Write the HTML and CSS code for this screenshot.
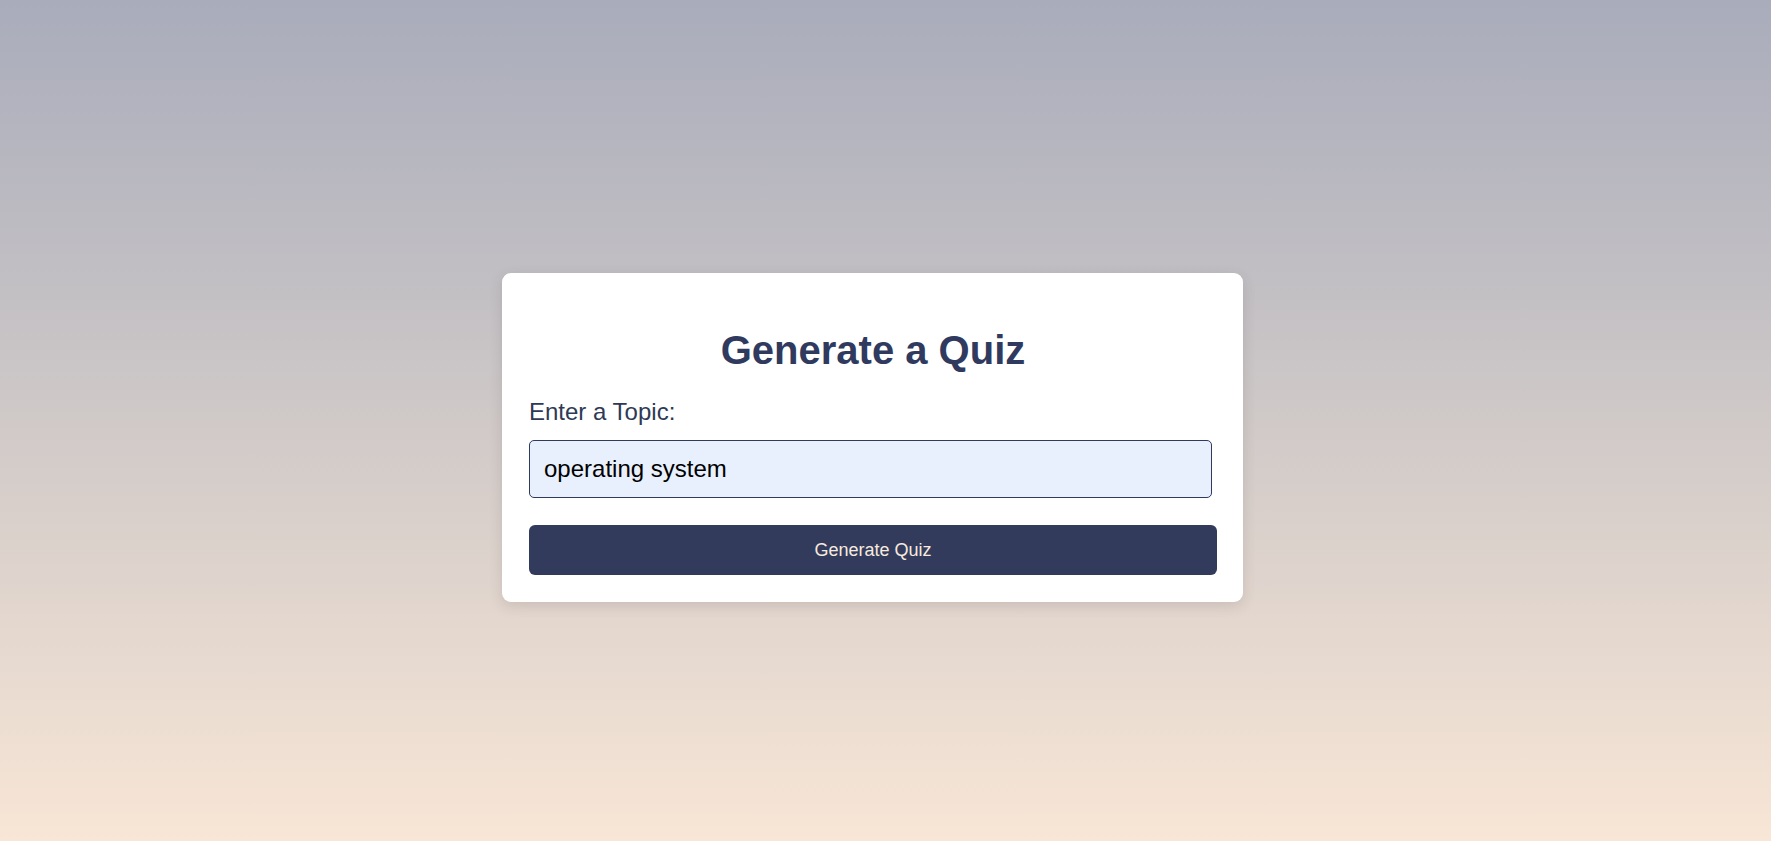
FILE: index.html
```html
<!DOCTYPE html>
<html lang="en">
<head>
<meta charset="utf-8">
<title>Generate a Quiz</title>
<link rel="stylesheet" href="styles.css">
</head>
<body>
<main class="page">
  <form class="card">
    <h2 class="title">Generate a Quiz</h2>
    <label class="label" for="topic">Enter a Topic:</label>
    <input class="input" id="topic" type="text" value="operating system">
    <button class="btn" type="button">Generate Quiz</button>
  </form>
</main>
</body>
</html>
```

FILE: styles.css
```css
html, body {
  margin: 0;
  padding: 0;
  height: 100%;
}
body {
  font-family: "Liberation Sans", Arial, sans-serif;
  background: linear-gradient(to bottom, #a9acbb 0%, #c3c0c4 35%, #dcd2cc 65%, #f8e6d6 100%);
}
.page {
  box-sizing: border-box;
  min-height: 100vh;
  display: flex;
  align-items: center;
  justify-content: center;
  padding: 33px 26px 0 0;
}
.card {
  box-sizing: border-box;
  width: 741px;
  background: #ffffff;
  border-radius: 9px;
  padding: 27px 26px 27px 27px;
  box-shadow: 0 4px 14px rgba(60, 50, 50, 0.14);
  display: flex;
  flex-direction: column;
  align-items: flex-start;
}
.title {
  align-self: stretch;
  margin: 28px 0 25px;
  text-align: center;
  font-size: 40px;
  font-weight: 700;
  color: #2f3a5e;
}
.label {
  font-size: 24px;
  color: #2e3a55;
  margin-bottom: 14px;
}
.input {
  box-sizing: border-box;
  width: 683px;
  height: 58px;
  padding: 0 14px;
  font-family: "Liberation Sans", Arial, sans-serif;
  font-size: 24px;
  color: #000000;
  background: #e8f0fe;
  border: 1px solid #2f3a5c;
  border-radius: 5px;
  outline: none;
  margin: 0 0 27px;
}
.btn {
  align-self: stretch;
  height: 50px;
  padding-top: 2px;
  border: none;
  border-radius: 6px;
  background: #323b5c;
  color: #f7eadf;
  font-family: "Liberation Sans", Arial, sans-serif;
  font-size: 18px;
  cursor: pointer;
}
```
